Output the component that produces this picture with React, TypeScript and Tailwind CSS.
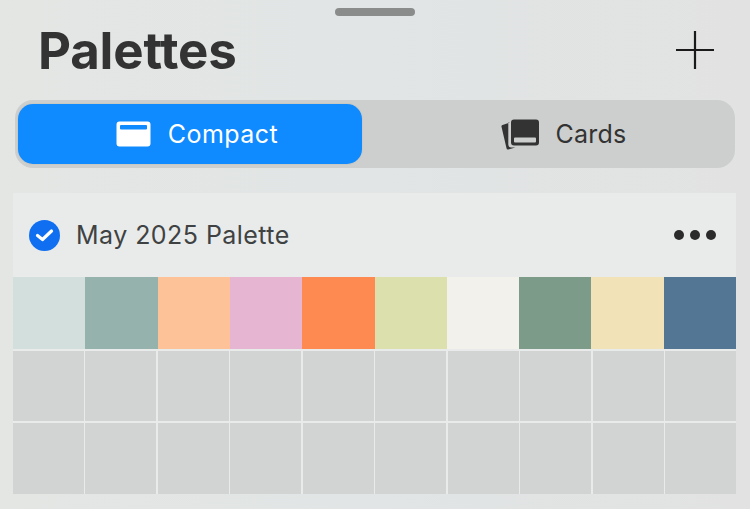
const colors = ["#d2dfdd","#95b2ac","#fec299","#e5b5d1","#fe8951","#dce0ad","#f2f1ec","#7c9c89","#f1e2b7","#537694"];

export default function App() {
  return (
    <div className="w-[750px] h-[509px] overflow-hidden bg-gradient-to-r from-[#e4e6e4] via-[#e1e5e5] to-[#e2e2e2] font-['Inter','Liberation_Sans',sans-serif] flex flex-col">
      <div className="flex justify-center pt-2">
        <div className="w-20 h-2 rounded-full bg-[#8a8c8c]" />
      </div>
      <div className="flex items-center justify-between h-[64px] pl-[38px] pr-[35px] mt-[2px]">
        <h1 className="text-[51px] leading-none font-bold text-[#333333] tracking-[-0.2px]">Palettes</h1>
        <svg width="40" height="40" viewBox="0 0 40 40" fill="none" stroke="#1a1a1a" strokeWidth="2.2">
          <path d="M20 1v38M1 20h38" />
        </svg>
      </div>
      <div className="mx-[15px] mt-[18px] h-[68px] w-[720px] rounded-[18px] bg-[#cdcece] flex items-center pl-[3px]">
        <div className="w-[344px] h-[60px] rounded-[15px] bg-[#0f8aff] flex items-center justify-center gap-[17px] pl-[14px] ring-1 ring-[#c9c9c4]">
          <svg width="35" height="26" viewBox="0 0 35 26">
            <path fillRule="evenodd" fill="#ffffff" d="M3.5 0.5h28a3 3 0 0 1 3 3v19a3 3 0 0 1-3 3h-28a3 3 0 0 1-3-3v-19a3 3 0 0 1 3-3zM5 4a1 1 0 0 0-1 1v2.500a1 1 0 0 0 1 1h25a1 1 0 0 0 1-1v-2.500a1 1 0 0 0-1-1z" />
          </svg>
          <span className="text-[25px] leading-none text-white tracking-[0.45px]">Compact</span>
        </div>
        <div className="flex-1 flex items-center justify-center gap-[17px] pl-[30px]">
          <svg width="38" height="31" viewBox="0 0 38 31">
            <path fill="#333333" d="M9 3.500 1.500 6a1.500 1.500 0 0 0-1 1.800l5 21.500a1.500 1.500 0 0 0 1.800 1.100l7-1.900h-4a3 3 0 0 1-3-3v-22z" />
            <path fillRule="evenodd" fill="#333333" d="M13 0.500h22a3 3 0 0 1 3 3v20a3 3 0 0 1-3 3h-22a3 3 0 0 1-3-3v-20a3 3 0 0 1 3-3zM14 18.500a1 1 0 0 0-1 1v3a1 1 0 0 0 1 1h20a1 1 0 0 0 1-1v-3a1 1 0 0 0-1-1z" />
          </svg>
          <span className="text-[25px] leading-none text-[#333333] tracking-[0.2px]">Cards</span>
        </div>
      </div>
      <div className="mx-[13px] mt-[25px] w-[723px] h-[84px] bg-[#e9ebeb] flex items-center pl-[16px] pr-[20px] gap-[16px]">
        <svg width="31" height="31" viewBox="0 0 31 31">
          <circle cx="15.500" cy="15.500" r="15.500" fill="#0f6ff0" />
          <path d="M8.500 15.500 13.500 19.500 22.500 11" fill="none" stroke="#ffffff" strokeWidth="3.200" strokeLinecap="round" strokeLinejoin="round" />
        </svg>
        <span className="text-[25px] leading-none text-[#3f4242] tracking-[0.45px] flex-1">May 2025 Palette</span>
        <div className="flex gap-[5.500px]">
          <div className="w-[10.500px] h-[10.500px] rounded-full bg-[#2b2b2b]" />
          <div className="w-[10.500px] h-[10.500px] rounded-full bg-[#2b2b2b]" />
          <div className="w-[10.500px] h-[10.500px] rounded-full bg-[#2b2b2b]" />
        </div>
      </div>
      <div className="mx-[13px] w-[723px] bg-[#e9eaea]">
        <div className="grid grid-cols-10 h-[72px]">
          {colors.map((c) => (
            <div key={c} className="h-full" style={{ backgroundColor: c }} />
          ))}
        </div>
        <div className="grid grid-cols-10 grid-rows-[70px_71px] gap-x-[1.500px] gap-y-[2px] pt-[2px]">
          {Array.from({ length: 20 }, (_, i) => (
            <div key={i} className="h-full bg-[#d2d4d3]" />
          ))}
        </div>
      </div>
    </div>
  );
}
